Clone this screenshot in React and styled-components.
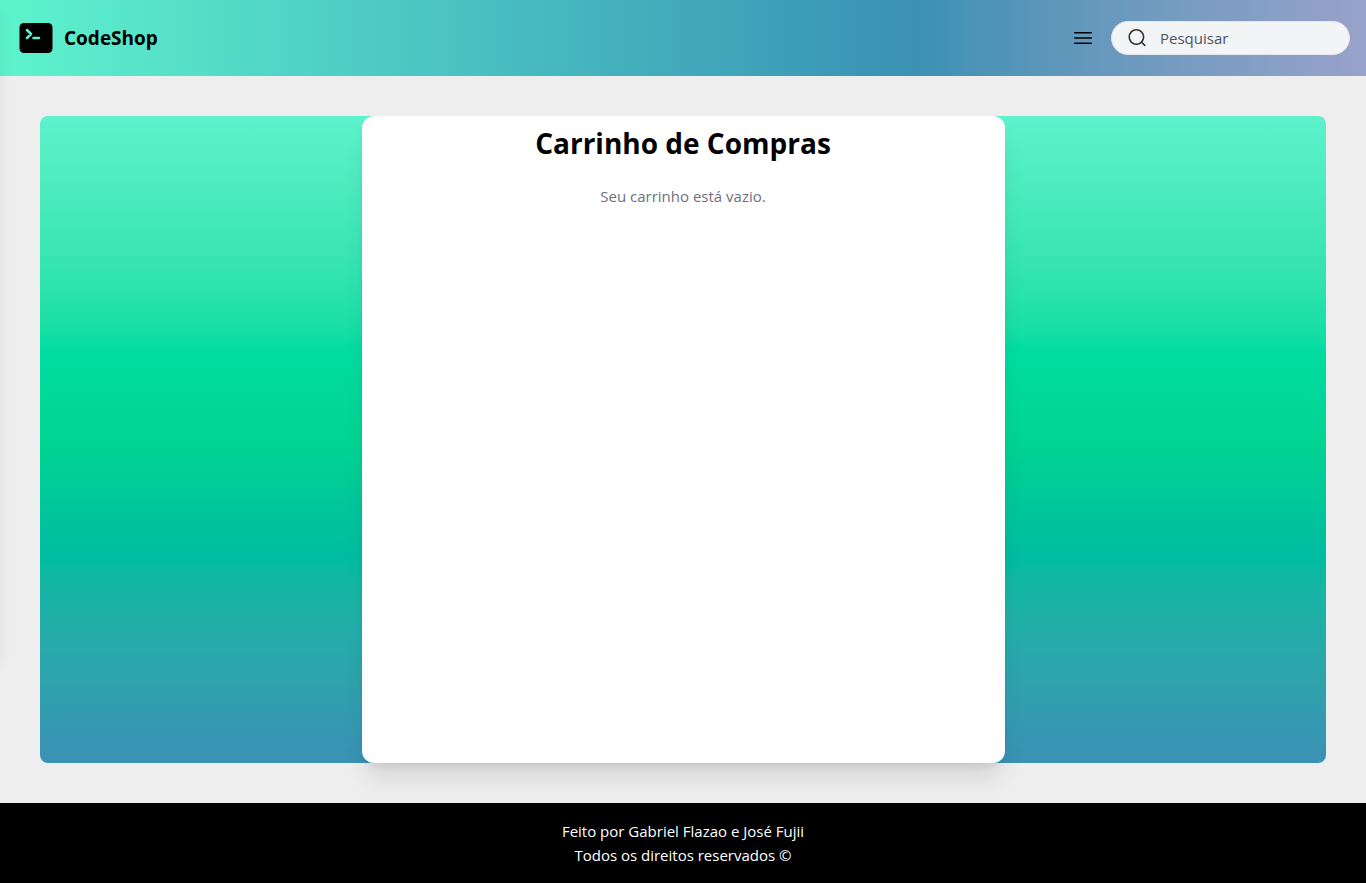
import React from "react";
import styled, { createGlobalStyle } from "styled-components";

const GlobalStyle = createGlobalStyle`
  *, *::before, *::after { box-sizing: border-box; }
  body {
    margin: 0;
    background: #eeeeee;
    color: #000;
    font-family: "Segoe UI", "Open Sans", "Noto Sans", sans-serif;
    font-size: 15px;
    line-height: 24px;
  }
  h1, p { margin: 0; }
`;

const Page = styled.div`
  display: flex;
  flex-direction: column;
  min-height: 100vh;
`;

const Header = styled.header`
  display: flex;
  align-items: center;
  justify-content: space-between;
  padding: 16px;
  height: 76px;
  background: linear-gradient(to right in oklab, #5df2cc 1%, #3a91b4 67%, #98a2ca 100%);
`;

const Brand = styled.a`
  display: flex;
  align-items: center;
  gap: 8px;
  color: #000;
  text-decoration: none;
  font-size: 19px;
  line-height: 28px;
  font-weight: 700;
`;

const Actions = styled.div`
  display: flex;
  align-items: center;
  gap: 16px;
`;

const MenuButton = styled.button`
  display: flex;
  padding: 0;
  border: 0;
  background: none;
  color: #000;
  cursor: pointer;
`;

const Search = styled.label`
  display: flex;
  align-items: center;
  gap: 12px;
  width: 239px;
  height: 34px;
  padding: 0 16px;
  border: 1px solid #e5e7eb;
  border-radius: 17px;
  background: #f3f4f6;
  color: #333;
`;

const SearchInput = styled.input`
  flex: 1;
  min-width: 0;
  padding: 0;
  border: 0;
  outline: 0;
  background: transparent;
  color: #4a5565;
  font: inherit;
  &::placeholder { color: #4a5565; opacity: 1; }
`;

const Drawer = styled.aside`
  position: fixed;
  z-index: 2;
  top: 0;
  left: -256px;
  width: 256px;
  height: 74vh;
  box-shadow: 0 10px 15px -3px rgba(0, 0, 0, 0.1), 0 4px 6px -4px rgba(0, 0, 0, 0.1);
`;

const Main = styled.main`
  flex: 1;
  display: flex;
  padding: 40px;
`;

const Backdrop = styled.section`
  flex: 1;
  display: flex;
  justify-content: center;
  border-radius: 8px;
  background: linear-gradient(to bottom in oklab, #5df2cc, oklch(76.5% 0.177 163.223), #3a91b4);
`;

const CartCard = styled.div`
  width: 50%;
  padding: 8px;
  border-radius: 12px;
  background: #fff;
  text-align: center;
  box-shadow: 0 20px 25px -5px rgba(0, 0, 0, 0.1), 0 8px 10px -6px rgba(0, 0, 0, 0.1);
`;

const Title = styled.h1`
  margin-bottom: 16px;
  font-size: 28px;
  line-height: 38px;
  font-weight: 700;
`;

const EmptyMessage = styled.p`
  padding-top: 6px;
  color: #6a7282;
`;

const Footer = styled.footer`
  padding: 16px;
  background: #000;
  color: #fff;
  text-align: center;
`;

function Logo() {
  return (
    <svg width="40" height="40" viewBox="0 0 40 40" aria-hidden="true">
      <rect x="3.5" y="5" width="33" height="30" rx="4.5" fill="#000" />
      <path d="M11 12l4 4-4 4M17.5 20h5.5" fill="none" stroke="#5df2cc" strokeWidth="2.5" strokeLinecap="round" strokeLinejoin="round" />
    </svg>
  );
}

function MenuIcon() {
  return (
    <svg width="24" height="24" viewBox="0 0 24 24" fill="none" stroke="currentColor" strokeWidth="1.5" strokeLinecap="round" aria-hidden="true">
      <path d="M3.75 6.75h16.5M3.75 12h16.5M3.75 17.25h16.5" />
    </svg>
  );
}

function SearchIcon() {
  return (
    <svg width="20" height="20" viewBox="0 0 20 20" fill="none" stroke="currentColor" strokeWidth="1.6" strokeLinecap="round" aria-hidden="true">
      <circle cx="8.4" cy="9" r="7.2" />
      <path d="M13.6 14.2l3.2 3.2" />
    </svg>
  );
}

export default function App() {
  return (
    <>
      <GlobalStyle />
      <Drawer aria-hidden="true" />
      <Page>
        <Header>
          <Brand href="#">
            <Logo />
            CodeShop
          </Brand>
          <Actions>
            <MenuButton type="button" aria-label="Menu">
              <MenuIcon />
            </MenuButton>
            <Search>
              <SearchIcon />
              <SearchInput type="text" placeholder="Pesquisar" aria-label="Pesquisar" />
            </Search>
          </Actions>
        </Header>
        <Main>
          <Backdrop>
            <CartCard>
              <Title>Carrinho de Compras</Title>
              <EmptyMessage>Seu carrinho está vazio.</EmptyMessage>
            </CartCard>
          </Backdrop>
        </Main>
        <Footer>
          <p>Feito por Gabriel Flazao e José Fujii</p>
          <p>Todos os direitos reservados ©</p>
        </Footer>
      </Page>
    </>
  );
}
